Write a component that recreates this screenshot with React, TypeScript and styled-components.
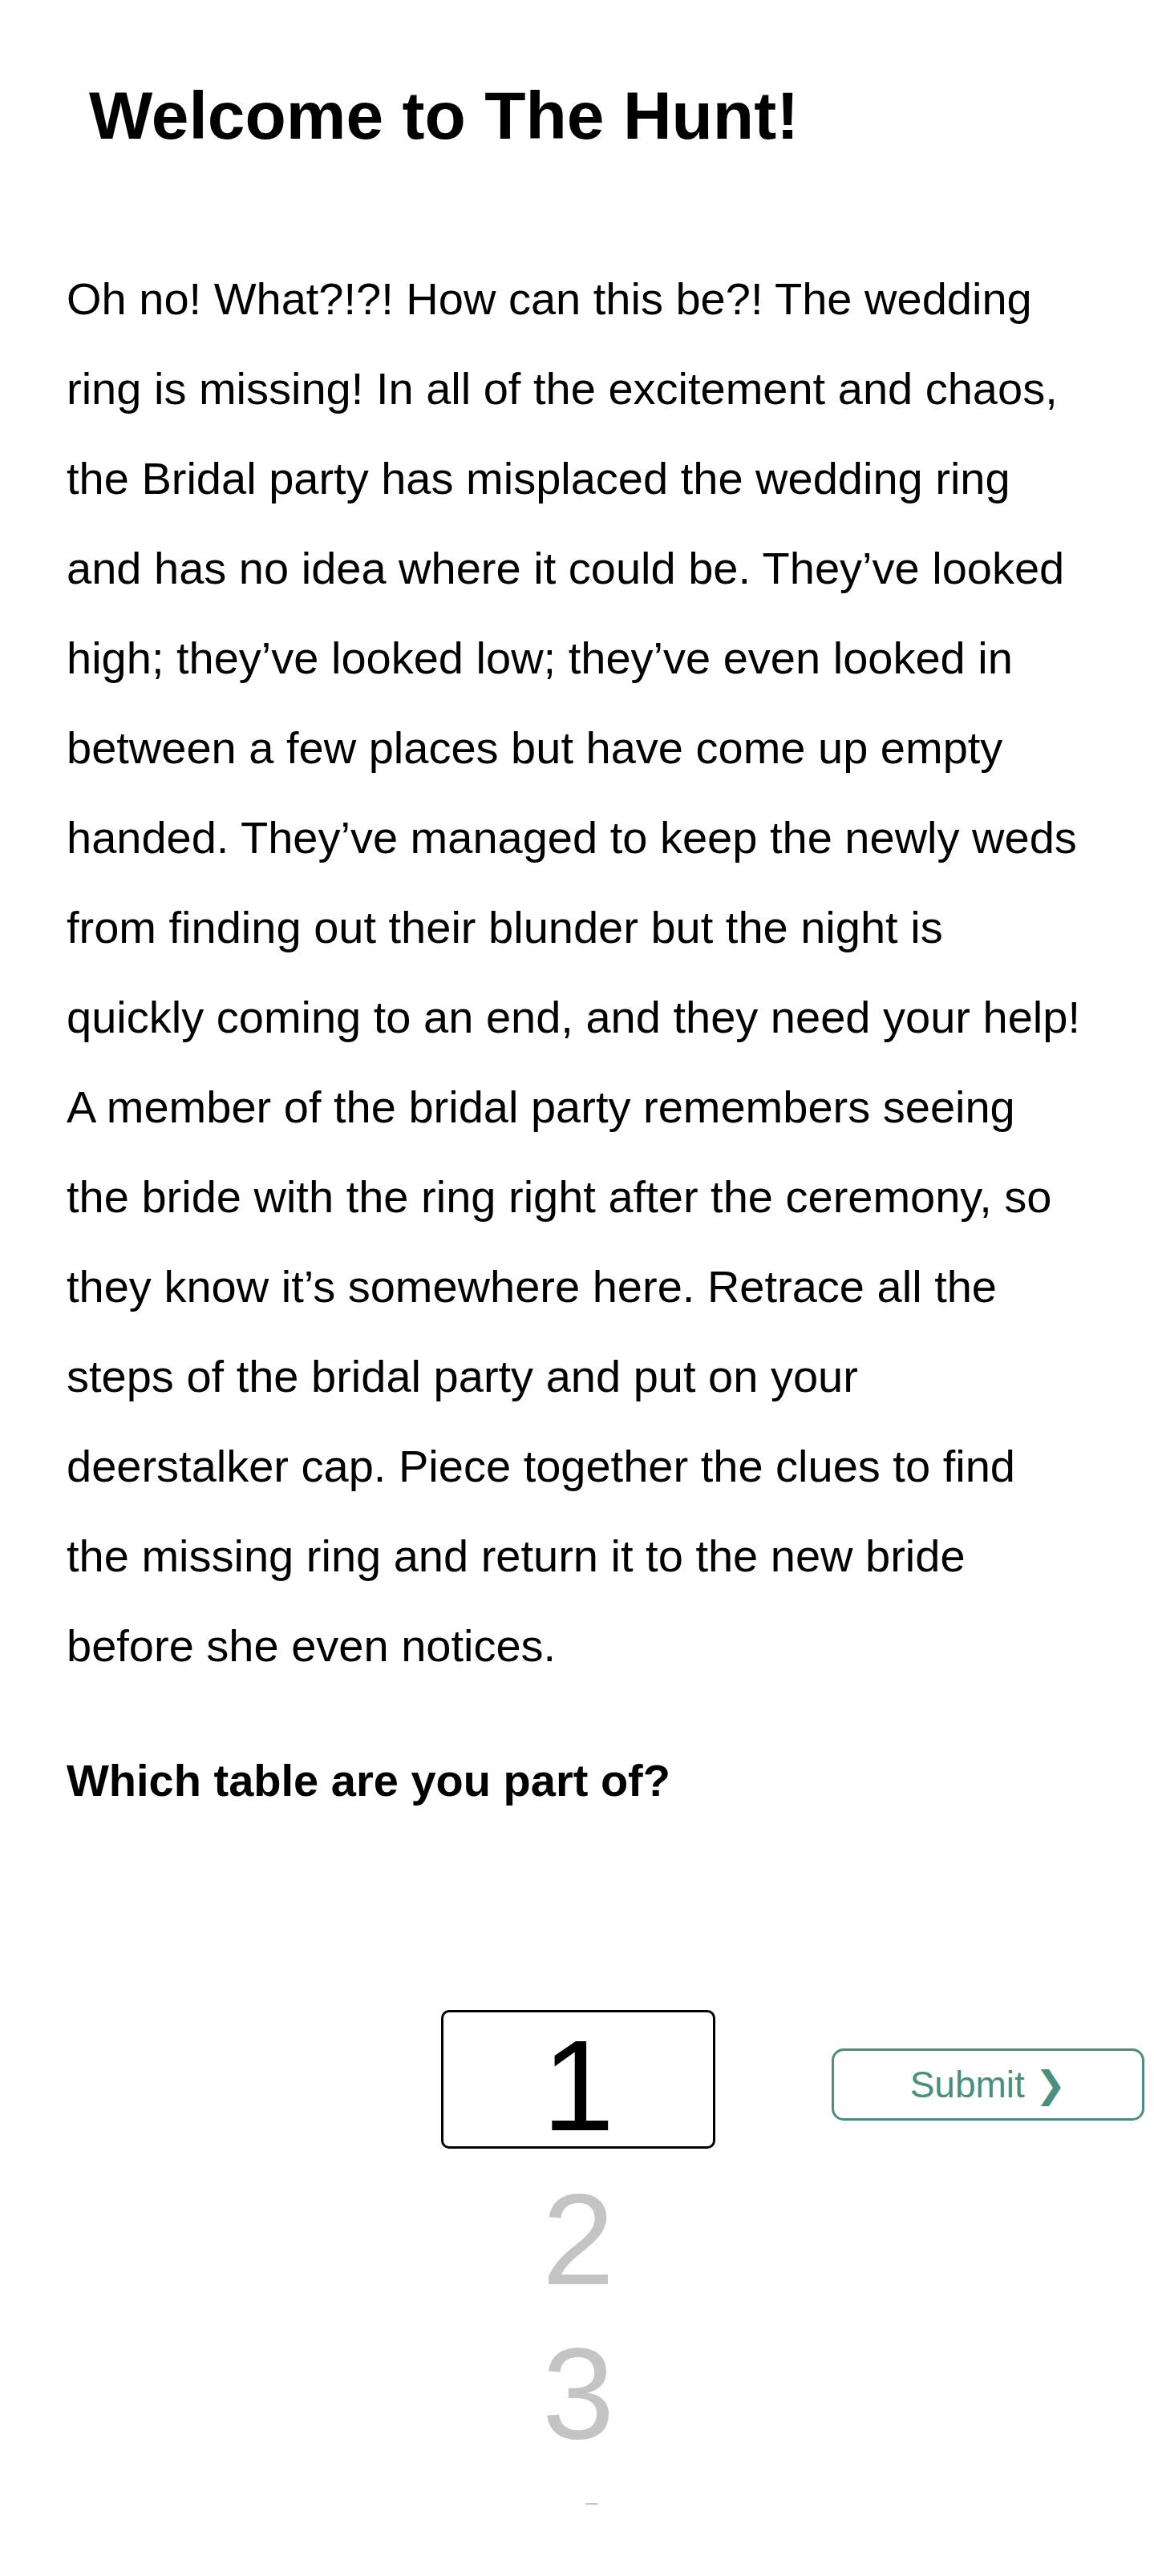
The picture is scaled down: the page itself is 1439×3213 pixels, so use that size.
import React from "react";
import styled, { createGlobalStyle } from "styled-components";

const GlobalStyle = createGlobalStyle`
  html, body {
    margin: 0;
    padding: 0;
    background: #ffffff;
  }
  body {
    font-family: "Liberation Sans", Arial, Helvetica, sans-serif;
    color: #000000;
  }
  * { box-sizing: border-box; }
`;

const Page = styled.main`
  padding: 94px 84px 90px 83px;
`;

const Title = styled.h1`
  margin: 0 0 123px 28px;
  font-size: 84px;
  line-height: 100px;
  font-weight: 700;
`;

const Story = styled.p`
  margin: 0;
  font-size: 56px;
  line-height: 112px;
  font-weight: 400;
`;

const Question = styled.p`
  margin: 56px 0 0;
  font-size: 56px;
  line-height: 112px;
  font-weight: 700;
`;

const PickerRow = styled.section`
  display: grid;
  grid-template-columns: 550px 342px 1fr;
  align-items: start;
  margin: 228px -84px 0 -83px;
`;

const Wheel = styled.div`
  grid-column: 2;
  position: relative;
  height: 619px;
  overflow: hidden;
`;

const WheelList = styled.ul`
  list-style: none;
  margin: 0;
  padding: 0;
`;

const WheelItem = styled.li<{ $active: boolean }>`
  height: 192px;
  font-size: 162px;
  line-height: 192px;
  text-align: center;
  color: ${(p) => (p.$active ? "#000000" : "#c4c4c4")};
`;

const SelectionFrame = styled.div`
  position: absolute;
  top: 2px;
  left: 0;
  width: 342px;
  height: 173px;
  border: 3px solid #000000;
  border-radius: 10px;
  pointer-events: none;
`;

const SubmitButton = styled.button`
  grid-column: 3;
  justify-self: start;
  margin: 50px 0 0 145px;
  width: 390px;
  height: 90px;
  display: flex;
  align-items: center;
  justify-content: center;
  gap: 13px;
  background: #ffffff;
  border: 3px solid #4a8f7d;
  border-radius: 15px;
  color: #4a8f7d;
  font-family: "Liberation Sans", Arial, Helvetica, sans-serif;
  font-size: 46px;
  line-height: 1;
  cursor: pointer;
  padding: 0;
`;

const Chevron = styled.span`
  font-family: "DejaVu Sans", sans-serif;
  font-size: 46px;
`;

const tables = Array.from({ length: 12 }, (_, i) => i + 1);

export default function App() {
  const selected = 1;
  return (
    <>
      <GlobalStyle />
      <Page>
        <Title>Welcome to The Hunt!</Title>
        <Story>
          Oh no! What?!?! How can this be?! The wedding ring is missing! In all of the
          excitement and chaos, the Bridal party has misplaced the wedding ring and has no
          idea where it could be. They’ve looked high; they’ve looked low; they’ve even
          looked in between a few places but have come up empty handed. They’ve managed to
          keep the newly weds from finding out their blunder but the night is quickly coming
          to an end, and they need your help! A member of the bridal party remembers seeing
          the bride with the ring right after the ceremony, so they know it’s somewhere here.
          Retrace all the steps of the bridal party and put on your deerstalker cap. Piece
          together the clues to find the missing ring and return it to the new bride before
          she even notices.
        </Story>
        <Question>Which table are you part of?</Question>
        <PickerRow>
          <Wheel>
            <WheelList>
              {tables.map((n) => (
                <WheelItem key={n} $active={n === selected}>
                  {n}
                </WheelItem>
              ))}
            </WheelList>
            <SelectionFrame />
          </Wheel>
          <SubmitButton type="button">
            <span>Submit</span>
            <Chevron>❯</Chevron>
          </SubmitButton>
        </PickerRow>
      </Page>
    </>
  );
}
